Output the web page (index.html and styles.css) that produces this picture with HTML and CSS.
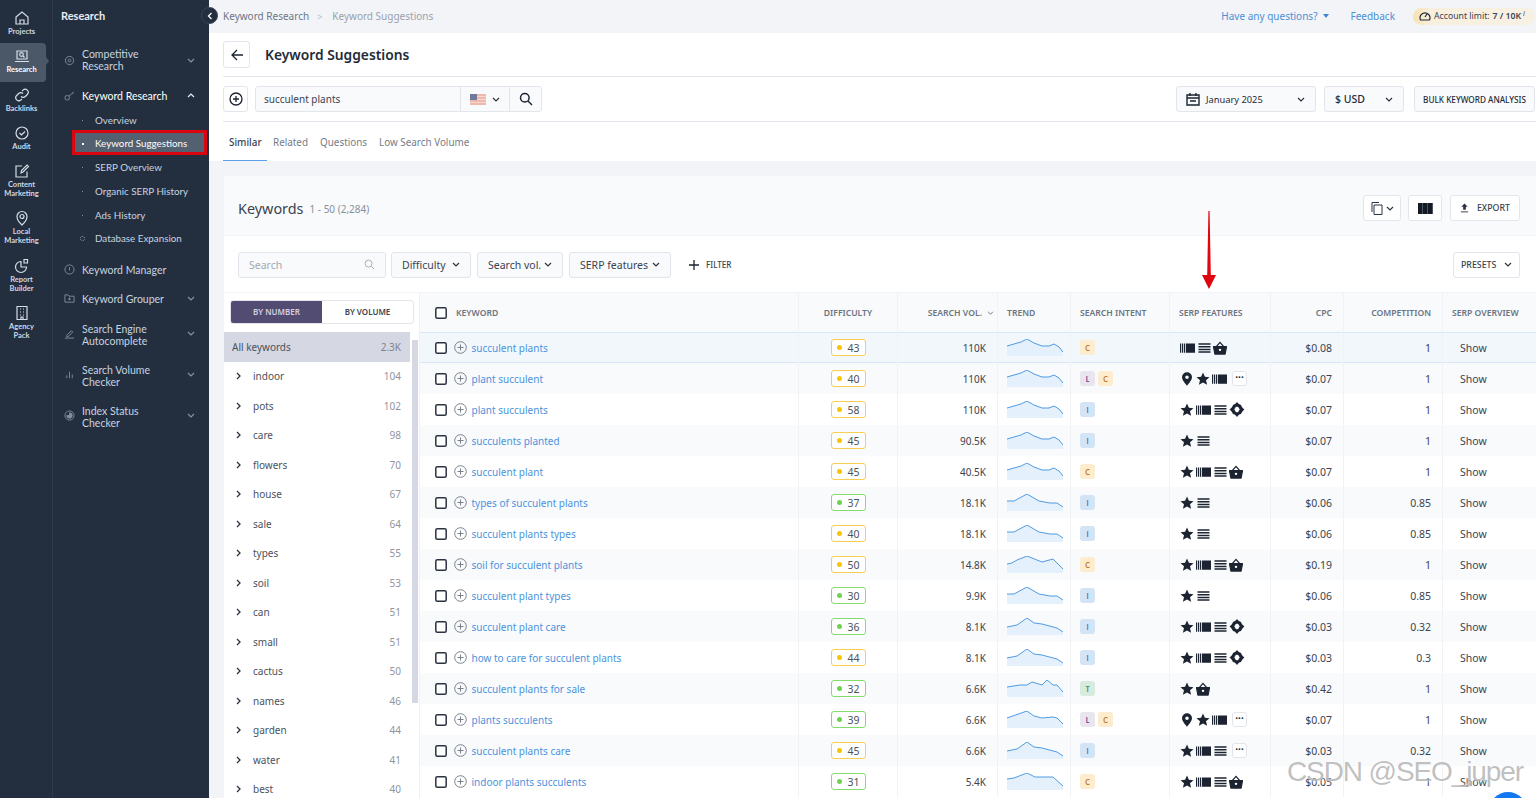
FILE: index.html
```html
<!DOCTYPE html>
<html lang="en">
<head>
<meta charset="utf-8">
<title>Keyword Suggestions</title>
<link rel="stylesheet" href="styles.css">
</head>
<body>
<svg class="defs" aria-hidden="true">
  <symbol id="star" viewBox="0 0 14 14"><path d="M7 .5l1.900 4.300 4.600.4-3.500 3 1.100 4.600L7 10.400l-4.100 2.400L4 8.200l-3.500-3 4.600-.4z" fill="#1c2431"/></symbol>
  <symbol id="car" viewBox="0 0 15 14"><path d="M0 2.500h1.200v9.300H0zM2 2.500h1.200v9.300H2zM4 2.500h1.200v9.300H4zM6 2.500h9v9.300H6z" fill="#1c2431"/></symbol>
  <symbol id="list" viewBox="0 0 13 14"><path d="M.5 3h12M.5 5.700h12M.5 8.400h12M.5 11h12" stroke="#1c2431" stroke-width="1.500"/></symbol>
  <symbol id="bask" viewBox="0 0 15 14"><path d="M.5 5.500h14l-1.500 8H2z" fill="#1c2431" stroke="#1c2431" stroke-width="1.200" stroke-linejoin="round"/><path d="M3.500 5.500L7.500 1l4 4.500" fill="none" stroke="#1c2431" stroke-width="1.400"/><circle cx="7.500" cy="9" r="1.300" fill="#fff"/></symbol>
  <symbol id="pin" viewBox="0 0 12 14"><path fill-rule="evenodd" d="M6 .3a5 5 0 0 1 5 5c0 3.300-5 8.400-5 8.400S1 8.600 1 5.300a5 5 0 0 1 5-5zm0 3.200a1.800 1.800 0 1 0 0 3.600 1.800 1.800 0 0 0 0-3.600z" fill="#1c2431"/></symbol>
  <symbol id="dia" viewBox="0 0 15 14"><path fill-rule="evenodd" d="M7.500 0c1.300 1.800 2.500 2.500 3.700 2.700.6 1.500 1.700 3 3.300 4.300-1.600 1.300-2.700 2.800-3.300 4.300-1.200.2-2.400.9-3.700 2.700-1.300-1.800-2.500-2.500-3.700-2.700C3.200 9.800 2.100 8.300.5 7c1.600-1.300 2.700-2.800 3.300-4.300C5 2.500 6.200 1.800 7.500 0zm0 4.200c-.5.4-1 .6-1.400.8-.2.6-.6 1.300-1.200 2 .6.7 1 1.400 1.200 2 .4.2.9.4 1.400.8.500-.4 1-.6 1.400-.8.2-.6.6-1.300 1.200-2-.6-.7-1-1.400-1.200-2-.4-.2-.9-.4-1.400-.8z" fill="#1c2431"/></symbol>
  <symbol id="chk" viewBox="0 0 12 12"><rect x=".8" y=".8" width="10.400" height="10.400" rx="1.500" fill="#fff" stroke="#2b3340" stroke-width="1.500"/></symbol>
  <symbol id="plus" viewBox="0 0 13 13"><circle cx="6.500" cy="6.500" r="5.800" fill="none" stroke="#7a818c"/><path d="M6.500 3.500v6M3.500 6.500h6" stroke="#7a818c"/></symbol>
  <symbol id="down" viewBox="0 0 8 5"><path d="M1 1l3 3 3-3" fill="none" stroke="currentColor" stroke-width="1.200"/></symbol>
  <symbol id="right" viewBox="0 0 5 8"><path d="M1 1l3 3-3 3" fill="none" stroke="#2b3340" stroke-width="1.300"/></symbol>
  <symbol id="tm" viewBox="0 0 56 18"><path d="M0 7L7 5 14 3 20 0 27 4 35 7 42 7 47 5 52 8 56 13V17H0z" fill="#e4f0fb"/><path d="M0 7L7 5 14 3 20 0 27 4 35 7 42 7 47 5 52 8 56 13" fill="none" stroke="#4f9be3"/></symbol>
  <symbol id="ta" viewBox="0 0 56 18"><path d="M0 7L7 7 20 0 32 7 43 9 50 9 56 13V17H0z" fill="#e4f0fb"/><path d="M0 7L7 7 20 0 32 7 43 9 50 9 56 13" fill="none" stroke="#4f9be3"/></symbol>
  <symbol id="tc" viewBox="0 0 56 18"><path d="M0 8L5 7 10 4 20 0 35 6 46 3 56 13V17H0z" fill="#e4f0fb"/><path d="M0 8L5 7 10 4 20 0 35 6 46 3 56 13" fill="none" stroke="#4f9be3"/></symbol>
  <symbol id="te" viewBox="0 0 56 18"><path d="M0 9L10 7 20 0 27 5 35 6 50 10 56 14V17H0z" fill="#e4f0fb"/><path d="M0 9L10 7 20 0 27 5 35 6 50 10 56 14" fill="none" stroke="#4f9be3"/></symbol>
  <symbol id="tt" viewBox="0 0 56 18"><path d="M0 7L13 5 20 5 25 2 35 5 40 0 46 5 50 5 56 12V17H0z" fill="#e4f0fb"/><path d="M0 7L13 5 20 5 25 2 35 5 40 0 46 5 50 5 56 12" fill="none" stroke="#4f9be3"/></symbol>
  <symbol id="tl" viewBox="0 0 56 18"><path d="M0 7L20 0 27 5 35 7 46 6 50 7 56 13V17H0z" fill="#e4f0fb"/><path d="M0 7L20 0 27 5 35 7 46 6 50 7 56 13" fill="none" stroke="#4f9be3"/></symbol>
  <symbol id="tr" viewBox="0 0 56 18"><path d="M0 6L7 5 20 0 28 4 46 4 56 13V17H0z" fill="#e4f0fb"/><path d="M0 6L7 5 20 0 28 4 46 4 56 13" fill="none" stroke="#4f9be3"/></symbol>
</svg>

<div class="app">
  <aside class="rail">
    <a class="rail-item"><svg class="ri" viewBox="0 0 16 16"><path d="M2 7l6-5 6 5v7H2zM6 14v-4h4v4"/></svg><span>Projects</span></a>
    <a class="rail-item active"><svg class="ri" viewBox="0 0 16 16"><path d="M3 3h10v8H3zM1 13.500h14"/><circle cx="7.500" cy="6.500" r="1.800"/><path d="M9 8l1.500 1.500"/></svg><span>Research</span></a>
    <a class="rail-item"><svg class="ri" viewBox="0 0 16 16"><path d="M7 9.500a3 3 0 0 0 4.300 0l2-2a3 3 0 0 0-4.300-4.300l-1 1M9 6.500a3 3 0 0 0-4.300 0l-2 2a3 3 0 0 0 4.300 4.300l1-1"/></svg><span>Backlinks</span></a>
    <a class="rail-item"><svg class="ri" viewBox="0 0 16 16"><circle cx="8" cy="8" r="6"/><path d="M5.500 8l2 2 3.500-3.500"/></svg><span>Audit</span></a>
    <a class="rail-item"><svg class="ri" viewBox="0 0 16 16"><path d="M13 8.500V14H2V3h6M7 10l.5-2.500L13 2l1.500 1.500L9 9z"/></svg><span>Content<br>Marketing</span></a>
    <a class="rail-item"><svg class="ri" viewBox="0 0 16 16"><path d="M8 15s-5-4.500-5-8.500a5 5 0 0 1 10 0C13 10.500 8 15 8 15z"/><circle cx="8" cy="6.500" r="2"/></svg><span>Local<br>Marketing</span></a>
    <a class="rail-item"><svg class="ri" viewBox="0 0 16 16"><path d="M7 3.500a5.500 5.500 0 1 0 5.500 5.500H7zM10 1.500h3.500V5H10z"/></svg><span>Report<br>Builder</span></a>
    <a class="rail-item"><svg class="ri" viewBox="0 0 16 16"><path d="M3 1.500h10v13H3zM6 4h1M9 4h1M6 7h1M9 7h1M6 10h1M9 10h1M7 14.500V12h2v2.500"/></svg><span>Agency<br>Pack</span></a>
  </aside>

  <nav class="nav">
    <h2 class="nav-title">Research</h2>
    <ul class="nav-list">
      <li class="n two first"><svg class="ni" viewBox="0 0 12 12"><circle cx="6" cy="6" r="4.500"/><circle cx="6" cy="6" r="1.500"/></svg><span>Competitive<br>Research</span><svg class="nc"><use href="#down"/></svg></li>
      <li class="n open"><svg class="ni" viewBox="0 0 12 12"><circle cx="3.500" cy="8.500" r="2.500"/><path d="M5.500 6.500L11 2M9 3.500l1 1"/></svg><span>Keyword Research</span><svg class="nc up"><use href="#down"/></svg></li>
      <li class="s"><i></i>Overview</li>
      <li class="s current"><i></i>Keyword Suggestions</li>
      <li class="s"><i></i>SERP Overview</li>
      <li class="s"><i></i>Organic SERP History</li>
      <li class="s"><i></i>Ads History</li>
      <li class="s db"><i></i>Database Expansion</li>
      <li class="n gapped"><svg class="ni" viewBox="0 0 12 12"><circle cx="6" cy="6" r="5"/><path d="M6 3.500V7"/></svg><span>Keyword Manager</span></li>
      <li class="n"><svg class="ni" viewBox="0 0 12 12"><path d="M1 2h3.500l1 1.500H11V10H1zM6 5v3M4.500 6.500h3"/></svg><span>Keyword Grouper</span><svg class="nc"><use href="#down"/></svg></li>
      <li class="n two"><svg class="ni" viewBox="0 0 12 12"><path d="M1 11h10M3 8l5-5 1.500 1.500-5 5H3z"/></svg><span>Search Engine<br>Autocomplete</span><svg class="nc"><use href="#down"/></svg></li>
      <li class="n two"><svg class="ni" viewBox="0 0 12 12"><path d="M3 10V7M6 10V3M9 10V6"/></svg><span>Search Volume<br>Checker</span><svg class="nc"><use href="#down"/></svg></li>
      <li class="n two"><svg class="ni" viewBox="0 0 12 12"><circle cx="6" cy="6" r="5"/><path d="M6 3v3H3a3 3 0 1 0 3-3z" fill="#7f8ea1"/></svg><span>Index Status<br>Checker</span><svg class="nc"><use href="#down"/></svg></li>
    </ul>
  </nav>

  <main class="main">
    <header class="topbar">
      <span class="crumb">Keyword Research</span><span class="sep">&gt;</span><span class="crumb light">Keyword Suggestions</span>
      <span class="top-right">
        <a class="toplink">Have any questions?</a><span class="caret"></span>
        <a class="toplink fb">Feedback</a>
        <span class="limit"><svg class="gauge" viewBox="0 0 12 12"><path d="M1.500 10a5 5 0 1 1 9 0zM6 7l2-3"/></svg>Account limit: <b>7 / 10K</b><sup>i</sup></span>
      </span>
    </header>

    <section class="head-card">
      <div class="title-row">
        <button class="icon-btn back"><svg viewBox="0 0 14 14"><path d="M13 7H2M7 2L2 7l5 5"/></svg></button>
        <h1>Keyword Suggestions</h1>
      </div>
      <div class="search-row">
        <button class="icon-btn add"><svg viewBox="0 0 14 14"><circle cx="7" cy="7" r="6"/><path d="M7 4v6M4 7h6"/></svg></button>
        <div class="query">
          <span class="q-text">succulent plants</span>
          <span class="q-flag"><svg class="flag" viewBox="0 0 16 11"><rect width="16" height="11" fill="#f6d8cf"/><path d="M0 1h16M0 4h16M0 7h16M0 10h16" stroke="#e39a8d" stroke-width="1.200"/><rect width="7" height="6" fill="#6f7a9b"/></svg><svg class="chev"><use href="#down"/></svg></span>
          <span class="q-go"><svg viewBox="0 0 14 14"><circle cx="5.800" cy="5.800" r="4.300"/><path d="M9 9l4 4"/></svg></span>
        </div>
        <div class="push select date"><svg class="cal" viewBox="0 0 14 14"><path d="M1 3h12v10H1zM1 6h12M4 1v3M10 1v3M4 9h6"/></svg><span>January 2025</span><svg class="chev end"><use href="#down"/></svg></div>
        <div class="select usd"><span>$ USD</span><svg class="chev end"><use href="#down"/></svg></div>
        <div class="select bulk">BULK KEYWORD ANALYSIS</div>
      </div>
      <div class="tabs">
        <a class="tab on">Similar</a><a class="tab">Related</a><a class="tab">Questions</a><a class="tab">Low Search Volume</a>
      </div>
    </section>

    <section class="panel">
      <div class="panel-head">
        <span class="ph-title">Keywords</span><span class="ph-count">1 - 50 (2,284)</span>
        <span class="ph-actions">
          <button class="tool copy"><svg viewBox="0 0 14 14"><path d="M4 4h8v9.500H4zM2 11V1.500h7"/></svg><svg class="chev"><use href="#down"/></svg></button>
          <button class="tool cols"><span class="bars"></span></button>
          <button class="tool export"><svg viewBox="0 0 10 10"><path d="M5 0L1.500 3.500H3.500V7h3V3.500h2zM1 9h8" fill="#2b3340"/><path d="M1 9.300h8" stroke="#2b3340"/></svg>EXPORT</button>
        </span>
      </div>
      <div class="filters">
        <div class="f-search"><span>Search</span><svg viewBox="0 0 12 12"><circle cx="5" cy="5" r="3.800"/><path d="M8 8l3 3"/></svg></div>
        <div class="f-btn w-dif">Difficulty<svg class="chev"><use href="#down"/></svg></div>
        <div class="f-btn w-vol">Search vol.<svg class="chev"><use href="#down"/></svg></div>
        <div class="f-btn w-ser">SERP features<svg class="chev"><use href="#down"/></svg></div>
        <div class="f-add"><svg viewBox="0 0 12 12"><path d="M6 1v10M1 6h10"/></svg>FILTER</div>
        <div class="f-btn presets">PRESETS<svg class="chev"><use href="#down"/></svg></div>
      </div>
      <div class="body">
        <div class="groups">
          <div class="toggle"><span class="t-on">BY NUMBER</span><span class="t-off">BY VOLUME</span></div>
          <div class="scroll-thumb"></div>
          <ul class="glist">
            <li class="all"><span>All keywords</span><b>2.3K</b></li>
            <li><svg><use href="#right"/></svg><span>indoor</span><b>104</b></li>
            <li><svg><use href="#right"/></svg><span>pots</span><b>102</b></li>
            <li><svg><use href="#right"/></svg><span>care</span><b>98</b></li>
            <li><svg><use href="#right"/></svg><span>flowers</span><b>70</b></li>
            <li><svg><use href="#right"/></svg><span>house</span><b>67</b></li>
            <li><svg><use href="#right"/></svg><span>sale</span><b>64</b></li>
            <li><svg><use href="#right"/></svg><span>types</span><b>55</b></li>
            <li><svg><use href="#right"/></svg><span>soil</span><b>53</b></li>
            <li><svg><use href="#right"/></svg><span>can</span><b>51</b></li>
            <li><svg><use href="#right"/></svg><span>small</span><b>51</b></li>
            <li><svg><use href="#right"/></svg><span>cactus</span><b>50</b></li>
            <li><svg><use href="#right"/></svg><span>names</span><b>46</b></li>
            <li><svg><use href="#right"/></svg><span>garden</span><b>44</b></li>
            <li><svg><use href="#right"/></svg><span>water</span><b>41</b></li>
            <li><svg><use href="#right"/></svg><span>best</span><b>40</b></li>
          </ul>
        </div>
        <div class="table">
          <div class="tr th">
            <div class="c kw"><svg class="cb"><use href="#chk"/></svg><span class="kw-h">KEYWORD</span></div>
            <div class="c ctr">DIFFICULTY</div>
            <div class="c rgt sv">SEARCH VOL.<svg class="chev"><use href="#down"/></svg></div>
            <div class="c lft">TREND</div>
            <div class="c lft">SEARCH INTENT</div>
            <div class="c lft">SERP FEATURES</div>
            <div class="c rgt">CPC</div>
            <div class="c rgt">COMPETITION</div>
            <div class="c lft">SERP OVERVIEW</div>
          </div>

          <div class="tr hl">
            <div class="c kw"><svg class="cb"><use href="#chk"/></svg><svg class="pl"><use href="#plus"/></svg><a>succulent plants</a></div>
            <div class="c ctr"><span class="d y"><i></i>43</span></div><div class="c rgt vol">110K</div>
            <div class="c lft"><svg class="sp"><use href="#tm"/></svg></div>
            <div class="c lft"><span class="it C">C</span></div>
            <div class="c lft fe"><svg class="car"><use href="#car"/></svg><svg class="lst"><use href="#list"/></svg><svg class="ic"><use href="#bask"/></svg></div>
            <div class="c rgt">$0.08</div><div class="c rgt">1</div><div class="c show">Show</div>
          </div>
          <div class="tr">
            <div class="c kw"><svg class="cb"><use href="#chk"/></svg><svg class="pl"><use href="#plus"/></svg><a>plant succulent</a></div>
            <div class="c ctr"><span class="d y"><i></i>40</span></div><div class="c rgt vol">110K</div>
            <div class="c lft"><svg class="sp"><use href="#tm"/></svg></div>
            <div class="c lft"><span class="it L">L</span><span class="it C">C</span></div>
            <div class="c lft fe"><svg class="ic"><use href="#pin"/></svg><svg class="ic"><use href="#star"/></svg><svg class="car"><use href="#car"/></svg><span class="more">···</span></div>
            <div class="c rgt">$0.07</div><div class="c rgt">1</div><div class="c show">Show</div>
          </div>
          <div class="tr">
            <div class="c kw"><svg class="cb"><use href="#chk"/></svg><svg class="pl"><use href="#plus"/></svg><a>plant succulents</a></div>
            <div class="c ctr"><span class="d y"><i></i>58</span></div><div class="c rgt vol">110K</div>
            <div class="c lft"><svg class="sp"><use href="#tm"/></svg></div>
            <div class="c lft"><span class="it I">I</span></div>
            <div class="c lft fe"><svg class="ic"><use href="#star"/></svg><svg class="car"><use href="#car"/></svg><svg class="lst"><use href="#list"/></svg><svg class="dm"><use href="#dia"/></svg></div>
            <div class="c rgt">$0.07</div><div class="c rgt">1</div><div class="c show">Show</div>
          </div>
          <div class="tr">
            <div class="c kw"><svg class="cb"><use href="#chk"/></svg><svg class="pl"><use href="#plus"/></svg><a>succulents planted</a></div>
            <div class="c ctr"><span class="d y"><i></i>45</span></div><div class="c rgt vol">90.5K</div>
            <div class="c lft"><svg class="sp"><use href="#tm"/></svg></div>
            <div class="c lft"><span class="it I">I</span></div>
            <div class="c lft fe"><svg class="ic"><use href="#star"/></svg><svg class="lst"><use href="#list"/></svg></div>
            <div class="c rgt">$0.07</div><div class="c rgt">1</div><div class="c show">Show</div>
          </div>
          <div class="tr">
            <div class="c kw"><svg class="cb"><use href="#chk"/></svg><svg class="pl"><use href="#plus"/></svg><a>succulent plant</a></div>
            <div class="c ctr"><span class="d y"><i></i>45</span></div><div class="c rgt vol">40.5K</div>
            <div class="c lft"><svg class="sp"><use href="#tm"/></svg></div>
            <div class="c lft"><span class="it C">C</span></div>
            <div class="c lft fe"><svg class="ic"><use href="#star"/></svg><svg class="car"><use href="#car"/></svg><svg class="lst"><use href="#list"/></svg><svg class="ic"><use href="#bask"/></svg></div>
            <div class="c rgt">$0.07</div><div class="c rgt">1</div><div class="c show">Show</div>
          </div>
          <div class="tr">
            <div class="c kw"><svg class="cb"><use href="#chk"/></svg><svg class="pl"><use href="#plus"/></svg><a>types of succulent plants</a></div>
            <div class="c ctr"><span class="d g"><i></i>37</span></div><div class="c rgt vol">18.1K</div>
            <div class="c lft"><svg class="sp"><use href="#ta"/></svg></div>
            <div class="c lft"><span class="it I">I</span></div>
            <div class="c lft fe"><svg class="ic"><use href="#star"/></svg><svg class="lst"><use href="#list"/></svg></div>
            <div class="c rgt">$0.06</div><div class="c rgt">0.85</div><div class="c show">Show</div>
          </div>
          <div class="tr">
            <div class="c kw"><svg class="cb"><use href="#chk"/></svg><svg class="pl"><use href="#plus"/></svg><a>succulent plants types</a></div>
            <div class="c ctr"><span class="d y"><i></i>40</span></div><div class="c rgt vol">18.1K</div>
            <div class="c lft"><svg class="sp"><use href="#ta"/></svg></div>
            <div class="c lft"><span class="it I">I</span></div>
            <div class="c lft fe"><svg class="ic"><use href="#star"/></svg><svg class="lst"><use href="#list"/></svg></div>
            <div class="c rgt">$0.06</div><div class="c rgt">0.85</div><div class="c show">Show</div>
          </div>
          <div class="tr">
            <div class="c kw"><svg class="cb"><use href="#chk"/></svg><svg class="pl"><use href="#plus"/></svg><a>soil for succulent plants</a></div>
            <div class="c ctr"><span class="d y"><i></i>50</span></div><div class="c rgt vol">14.8K</div>
            <div class="c lft"><svg class="sp"><use href="#tc"/></svg></div>
            <div class="c lft"><span class="it C">C</span></div>
            <div class="c lft fe"><svg class="ic"><use href="#star"/></svg><svg class="car"><use href="#car"/></svg><svg class="lst"><use href="#list"/></svg><svg class="ic"><use href="#bask"/></svg></div>
            <div class="c rgt">$0.19</div><div class="c rgt">1</div><div class="c show">Show</div>
          </div>
          <div class="tr">
            <div class="c kw"><svg class="cb"><use href="#chk"/></svg><svg class="pl"><use href="#plus"/></svg><a>succulent plant types</a></div>
            <div class="c ctr"><span class="d g"><i></i>30</span></div><div class="c rgt vol">9.9K</div>
            <div class="c lft"><svg class="sp"><use href="#ta"/></svg></div>
            <div class="c lft"><span class="it I">I</span></div>
            <div class="c lft fe"><svg class="ic"><use href="#star"/></svg><svg class="lst"><use href="#list"/></svg></div>
            <div class="c rgt">$0.06</div><div class="c rgt">0.85</div><div class="c show">Show</div>
          </div>
          <div class="tr">
            <div class="c kw"><svg class="cb"><use href="#chk"/></svg><svg class="pl"><use href="#plus"/></svg><a>succulent plant care</a></div>
            <div class="c ctr"><span class="d g"><i></i>36</span></div><div class="c rgt vol">8.1K</div>
            <div class="c lft"><svg class="sp"><use href="#te"/></svg></div>
            <div class="c lft"><span class="it I">I</span></div>
            <div class="c lft fe"><svg class="ic"><use href="#star"/></svg><svg class="car"><use href="#car"/></svg><svg class="lst"><use href="#list"/></svg><svg class="dm"><use href="#dia"/></svg></div>
            <div class="c rgt">$0.03</div><div class="c rgt">0.32</div><div class="c show">Show</div>
          </div>
          <div class="tr">
            <div class="c kw"><svg class="cb"><use href="#chk"/></svg><svg class="pl"><use href="#plus"/></svg><a>how to care for succulent plants</a></div>
            <div class="c ctr"><span class="d y"><i></i>44</span></div><div class="c rgt vol">8.1K</div>
            <div class="c lft"><svg class="sp"><use href="#te"/></svg></div>
            <div class="c lft"><span class="it I">I</span></div>
            <div class="c lft fe"><svg class="ic"><use href="#star"/></svg><svg class="car"><use href="#car"/></svg><svg class="lst"><use href="#list"/></svg><svg class="dm"><use href="#dia"/></svg></div>
            <div class="c rgt">$0.03</div><div class="c rgt">0.3</div><div class="c show">Show</div>
          </div>
          <div class="tr">
            <div class="c kw"><svg class="cb"><use href="#chk"/></svg><svg class="pl"><use href="#plus"/></svg><a>succulent plants for sale</a></div>
            <div class="c ctr"><span class="d g"><i></i>32</span></div><div class="c rgt vol">6.6K</div>
            <div class="c lft"><svg class="sp"><use href="#tt"/></svg></div>
            <div class="c lft"><span class="it T">T</span></div>
            <div class="c lft fe"><svg class="ic"><use href="#star"/></svg><svg class="ic"><use href="#bask"/></svg></div>
            <div class="c rgt">$0.42</div><div class="c rgt">1</div><div class="c show">Show</div>
          </div>
          <div class="tr">
            <div class="c kw"><svg class="cb"><use href="#chk"/></svg><svg class="pl"><use href="#plus"/></svg><a>plants succulents</a></div>
            <div class="c ctr"><span class="d g"><i></i>39</span></div><div class="c rgt vol">6.6K</div>
            <div class="c lft"><svg class="sp"><use href="#tl"/></svg></div>
            <div class="c lft"><span class="it L">L</span><span class="it C">C</span></div>
            <div class="c lft fe"><svg class="ic"><use href="#pin"/></svg><svg class="ic"><use href="#star"/></svg><svg class="car"><use href="#car"/></svg><span class="more">···</span></div>
            <div class="c rgt">$0.07</div><div class="c rgt">1</div><div class="c show">Show</div>
          </div>
          <div class="tr">
            <div class="c kw"><svg class="cb"><use href="#chk"/></svg><svg class="pl"><use href="#plus"/></svg><a>succulent plants care</a></div>
            <div class="c ctr"><span class="d y"><i></i>45</span></div><div class="c rgt vol">6.6K</div>
            <div class="c lft"><svg class="sp"><use href="#te"/></svg></div>
            <div class="c lft"><span class="it I">I</span></div>
            <div class="c lft fe"><svg class="ic"><use href="#star"/></svg><svg class="car"><use href="#car"/></svg><svg class="lst"><use href="#list"/></svg><span class="more">···</span></div>
            <div class="c rgt">$0.03</div><div class="c rgt">0.32</div><div class="c show">Show</div>
          </div>
          <div class="tr">
            <div class="c kw"><svg class="cb"><use href="#chk"/></svg><svg class="pl"><use href="#plus"/></svg><a>indoor plants succulents</a></div>
            <div class="c ctr"><span class="d g"><i></i>31</span></div><div class="c rgt vol">5.4K</div>
            <div class="c lft"><svg class="sp"><use href="#tr"/></svg></div>
            <div class="c lft"><span class="it C">C</span></div>
            <div class="c lft fe"><svg class="ic"><use href="#star"/></svg><svg class="car"><use href="#car"/></svg><svg class="lst"><use href="#list"/></svg><svg class="ic"><use href="#bask"/></svg></div>
            <div class="c rgt">$0.05</div><div class="c rgt">1</div><div class="c show">Show</div>
          </div>
        </div>
      </div>
    </section>
  </main>

  <button class="collapse"><svg viewBox="0 0 6 8"><path d="M4.500 1L1.500 4l3 3"/></svg></button>
  <svg class="arrow" viewBox="0 0 16 78"><path d="M7.400 0h1.200L9.800 64 15 64 8 78 1 64 6.200 64z" fill="#e0060f"/></svg>
  <div class="chat"></div>
  <div class="watermark">CSDN @SEO_juper</div>
</div>
</body>
</html>
```
FILE: styles.css
```css
* { box-sizing: border-box; }
html, body { margin: 0; height: 798px; overflow: hidden; }
body { font-family: "Noto Sans", sans-serif; font-size: 10.5px; color: #3b4350; background: #f2f4f8; }
.defs { position: absolute; width: 0; height: 0; }
ul { list-style: none; margin: 0; padding: 0; }
button { font: inherit; background: #fff; padding: 0; cursor: pointer; }
.app { position: relative; display: flex; height: 798px; overflow: hidden; }

/* icon rail */
.rail { width: 53px; flex: none; background: #232f3e; border-right: 1px solid #2f3b4b; padding-top: 5px; font-family: Lato, sans-serif; }
.rail-item { position: relative; display: flex; flex-direction: column; align-items: center; width: 46px; padding: 5px 3px 7.300px 0; color: #cfd8e4; font-size: 7.500px; font-weight: 700; line-height: 9px; text-align: center; }
.rail-item span { margin-top: 1px; }
.rail-item.active { background: #4a5868; border-radius: 0 4px 4px 0; color: #fff; }
.rail-item.active::after { content: ""; position: absolute; left: 46px; top: 14px; border: 4px solid transparent; border-left: 3px solid #4a5868; }
.ri { display: block; width: 16px; height: 16px; fill: none; stroke: #d5dde7; stroke-width: 1.200; }

/* nav */
.nav { width: 156px; flex: none; background: #232f3e; font-family: Lato, sans-serif; font-size: 10.500px; color: #c8d3e0; }
.nav-title { margin: 0; padding: 9px 0 0 8px; height: 32px; font-size: 11px; line-height: 14px; font-weight: 700; color: #e8edf3; }
.n { position: relative; display: flex; align-items: center; padding-left: 29px; height: 29px; line-height: 12px; }
.n.two { height: 41px; padding-top: 2px; }
.n.first { margin-top: 13px; height: 30px; padding-top: 0; }
.n.open { margin-top: 7.500px; height: 26px; color: #fff; }
.n.gapped { margin-top: 4.200px; }
.ni { position: absolute; left: 11px; top: 50%; width: 11px; height: 11px; margin-top: -5.500px; fill: none; stroke: #7f8ea1; }
.nc { position: absolute; right: 14px; top: 50%; width: 8px; height: 5px; margin-top: -2.500px; color: #8492a4; }
.nc.up { transform: rotate(180deg); color: #e8edf3; }
.s { position: relative; height: 23.800px; line-height: 23.800px; padding-left: 42px; font-size: 9.800px; }
.s i { position: absolute; left: 29px; top: 11px; width: 1px; height: 1px; background: #8492a4; }
.s.current { height: 21px; line-height: 23px; margin: -.3px 4px 3.100px 21px; padding-left: 21px; background: #53606f; color: #fff; outline: 3px solid #d9060f; outline-offset: -1px; }
.s.current i { left: 8px; top: 11px; width: 2px; height: 2px; background: #fff; }
.s.db { line-height: 22.800px; }
.s.db i { left: 27px; top: 9px; width: 5px; height: 5px; background: none; border: 1px dotted #8492a4; border-radius: 50%; }

/* main */
.main { flex: 1; min-width: 0; min-height: 0; display: flex; flex-direction: column; }
.topbar { flex: none; display: flex; align-items: center; height: 33px; padding: 0 1px 1px 14px; background: #f2f4f8; font-size: 10px; }
.crumb { color: #6e7682; }
.crumb.light { color: #9aa1ac; }
.sep { margin: 0 10px 0 8px; color: #b5bac3; font-size: 9px; }
.top-right { margin-left: auto; display: flex; align-items: center; }
.toplink { color: #4b8fd6; }
.caret { margin-left: 6px; border: 3.500px solid transparent; border-top: 4px solid #3f85d0; border-bottom: 0; }
.fb { margin: 0 18px 0 21px; }
.limit { display: flex; align-items: center; gap: 2px; height: 17px; padding: 0 2px 0 6px; width: 122px; border-radius: 9px; background: linear-gradient(90deg, #fae2b0, #f8f0de 14%, #f7f1e4); font-size: 8.700px; color: #3b4350; white-space: nowrap; }
.limit b { font-weight: 600; margin-left: 1px; }
.limit sup { font-size: 7px; font-style: italic; margin-top: -6px; }
.gauge { width: 12px; height: 12px; margin-right: 1px; fill: none; stroke: #232b38; stroke-width: 1.200; }

.head-card { flex: none; background: #fff; padding: 0 0 0 14px; height: 128px; }
.title-row { display: flex; align-items: center; height: 44px; border-bottom: 1px solid #e2e5ec; }
h1 { margin: 0 0 0 15px; font-size: 13.800px; font-weight: 600; color: #232b38; }
.icon-btn { display: flex; align-items: center; justify-content: center; border: 1px solid #e2e5ec; border-radius: 3px; }
.icon-btn svg { fill: none; stroke: #1c2431; stroke-width: 1.300; }
.back { width: 27px; height: 27px; }
.back svg { width: 14px; height: 14px; }
.add { width: 25px; height: 26px; }
.add svg { width: 14px; height: 14px; }
.search-row { display: flex; align-items: center; height: 45px; padding-right: 1px; border-bottom: 1px solid #e2e5ec; }
.query { display: flex; height: 26px; margin-left: 7px; width: 287px; border: 1px solid #e2e5ec; border-radius: 3px; background: #f9fafc; }
.q-text { flex: 1; padding-left: 8px; line-height: 24px; font-size: 10px; color: #3b4350; }
.q-flag { width: 49px; display: flex; align-items: center; gap: 6px; padding-left: 9px; border-left: 1px solid #e2e5ec; }
.flag { width: 16px; height: 11px; }
.chev { width: 8px; height: 5px; color: #2b3340; flex: none; }
.q-go { width: 32px; display: flex; align-items: center; justify-content: center; border-left: 1px solid #e2e5ec; }
.q-go svg { width: 14px; height: 14px; fill: none; stroke: #1c2431; stroke-width: 1.500; }
.select { display: flex; align-items: center; height: 26px; border: 1px solid #e2e5ec; border-radius: 3px; background: #f9fafc; color: #232b38; }
.push { margin-left: auto; }
.date { width: 140px; padding: 0 10px 0 9px; font-size: 9.300px; }
.cal { width: 14px; height: 14px; margin-right: 6px; fill: none; stroke: #1c2431; stroke-width: 1.400; }
.chev.end { margin-left: auto; }
.usd { width: 80px; margin-left: 8px; padding: 0 10px; font-size: 10.500px; font-weight: 500; }
.bulk { width: 121px; margin-left: 10px; justify-content: center; font-size: 8.200px; font-weight: 500; }
.tabs { display: flex; height: 39px; font-size: 9.900px; }
.tab { padding: 0 6px; line-height: 40px; color: #747c88; }
.tab.on { color: #3b4350; font-weight: 500; border-bottom: 1px solid #5ba2e6; width: 44px; }

.panel { flex: 1; min-height: 0; margin: 15px 0 0 15px; background: #fff; display: flex; flex-direction: column; }
.panel-head { flex: none; display: flex; align-items: center; height: 60px; padding: 5px 16px 0 14px; background: #f9fafc; border-bottom: 1px solid #f2f3f7; }
.ph-title { font-size: 14.400px; color: #3b4350; }
.ph-count { margin: 2px 0 0 6px; color: #8a909b; font-size: 10px; }
.ph-actions { margin-left: auto; display: flex; gap: 7px; }
.tool { display: flex; align-items: center; justify-content: center; height: 26px; border: 1px solid #e2e5ec; border-radius: 3px; background: #fff; }
.copy { width: 38px; gap: 2px; }
.copy svg:first-child { width: 14px; height: 14px; fill: none; stroke: #2b3340; }
.cols { width: 34px; }
.bars { display: block; width: 15px; height: 11px; background: repeating-linear-gradient(90deg, #141a24 0 3.700px, #4b5360 3.700px 5px); }
.export { width: 70px; gap: 8px; margin-left: 1px; font-size: 8.800px; font-weight: 500; color: #3b4350; }
.export svg { width: 9px; height: 10px; }
.filters { flex: none; display: flex; align-items: center; height: 57px; padding: 1px 16px 0 14px; border-bottom: 1px solid #f2f3f7; }
.f-search { display: flex; align-items: center; justify-content: space-between; width: 148px; height: 26px; padding: 0 10px; border: 1px solid #e2e5ec; border-radius: 3px; background: #f9fafc; color: #a3a9b3; }
.f-search svg { width: 11px; height: 11px; fill: none; stroke: #a3a9b3; }
.f-btn { display: flex; align-items: center; justify-content: space-between; height: 26px; padding: 0 10px; border: 1px solid #e2e5ec; border-radius: 3px; background: #f9fafc; color: #3b4350; }
.w-dif { width: 80px; margin-left: 5px; }
.w-vol { width: 86px; margin-left: 6px; }
.w-ser { width: 102px; margin-left: 6px; }
.f-add { display: flex; align-items: center; gap: 6px; margin-left: 17px; font-size: 8.100px; font-weight: 500; color: #3b4350; }
.f-add svg { width: 12px; height: 12px; fill: none; stroke: #1c2431; stroke-width: 1.300; }
.presets { margin-left: auto; width: 67px; padding: 0 7px; background: #fff; font-size: 8.800px; font-weight: 500; }

.body { flex: 1; display: flex; min-height: 0; }
.groups { position: relative; width: 196px; flex: none; border-right: 1px solid #eef0f5; }
.toggle { display: flex; width: 184px; height: 24px; margin: 7px 0 8px 6px; border: 1px solid #e2e5ec; border-radius: 3px; overflow: hidden; font-size: 8px; font-weight: 600; line-height: 22px; text-align: center; }
.t-on { width: 91px; background: #534c72; color: #d4d2e0; }
.t-off { flex: 1; color: #3b4350; }
.scroll-thumb { position: absolute; left: 188px; top: 47px; width: 6px; height: 363px; background: #d5d8e3; }
.glist { width: 186px; font-size: 10px; }
.glist li { display: flex; align-items: center; height: 29.500px; padding: 0 9px 0 12px; }
.glist svg { width: 5px; height: 8px; margin-right: 12px; flex: none; }
.glist span { flex: 1; color: #4a525e; }
.glist b { font-weight: 400; color: #8f95a0; }
.glist .all { padding-left: 8px; background: #d5d8e3; }
.glist .all b { color: #7d838e; }

.table { flex: 1; overflow: hidden; }
.tr { display: grid; grid-template-columns: 379px 99px 100px 73px 99px 101px 73px 99px 1fr; height: 31px; }
.tr:nth-child(odd) { background: #f9fafc; }
.tr.th { height: 39px; background: #f9fafc; font-size: 8.600px; font-weight: 600; color: #6c7480; }
.tr.hl { background: #f2f7fc; box-shadow: inset 0 1px 0 #d7e7f7, inset 0 -1px 0 #d7e7f7; }
.c { display: flex; align-items: center; border-right: 1px solid #f1f2f6; white-space: nowrap; }
.c:last-child { border-right: 0; }
.ctr { justify-content: center; }
.rgt { justify-content: flex-end; padding-right: 11px; }
.vol { font-size: 10px; }
.lft { padding-left: 9px; }
.sv .chev { width: 7px; height: 4px; margin-left: 5px; color: #6c7480; }
.th .rgt.sv { padding-right: 3px; }
.kw { padding-left: 15px; }
.cb { width: 12px; height: 12px; flex: none; }
.kw-h { margin-left: 9px; }
.pl { width: 13px; height: 13px; margin: 0 4.500px 0 7px; flex: none; }
.kw a { color: #4b93dc; font-size: 10px; }
.d { display: flex; align-items: center; justify-content: center; gap: 5px; width: 35px; height: 17px; margin-left: 1px; border: 1px solid; border-radius: 3px; background: #fff; color: #4a525e; }
.d i { width: 5px; height: 5px; border-radius: 50%; }
.d.y { border-color: #f6cf4e; }
.d.y i { background: #f7c600; }
.d.g { border-color: #86dc6a; }
.d.g i { background: #6fd24f; }
.it { display: flex; align-items: center; justify-content: center; width: 15px; height: 15px; margin-right: 3px; border-radius: 3px; font-family: Lato, sans-serif; font-size: 7px; font-weight: 700; }
.it.C { background: #fdecce; color: #b5762c; }
.it.L { background: #e8e5ee; color: #6b3f8e; }
.it.I { background: #d3e4f7; color: #3f78b5; }
.it.T { background: #d7ecdf; color: #4d8a6a; }
.fe { gap: 2px; padding-left: 10px; }
.ic { width: 14px; height: 14px; }
.dm { width: 16px; height: 15px; }
.car { width: 15px; height: 14px; }
.lst { width: 13px; height: 14px; margin-left: 1px; }
.more { width: 15px; height: 15px; margin-left: 3px; border: 1px solid #e2e5ec; border-radius: 3px; background: #fff; font-size: 10px; line-height: 11px; font-weight: 700; text-align: center; color: #1c2431; }
.sp { width: 56px; height: 18px; }
.show { padding-left: 17px; color: #3b4350; }

/* overlays */
.collapse { position: absolute; left: 201px; top: 7px; width: 17px; height: 17px; border: 1px solid #3b4656; border-radius: 50%; background: #232f3e; display: flex; align-items: center; justify-content: center; }
.collapse svg { width: 6px; height: 8px; fill: none; stroke: #fff; stroke-width: 1.300; }
.arrow { position: absolute; left: 1201px; top: 211px; width: 16px; height: 78px; }
.chat { position: absolute; left: 1489px; top: 792px; width: 38px; height: 38px; border-radius: 50%; background: #1477f2; }
.watermark { position: absolute; left: 1287px; top: 753px; font-family: "Liberation Sans", sans-serif; font-size: 28px; letter-spacing: -1.100px; line-height: 38px; color: rgba(150,150,150,.6); text-shadow: 0 0 2px #fff; white-space: nowrap; }
```
